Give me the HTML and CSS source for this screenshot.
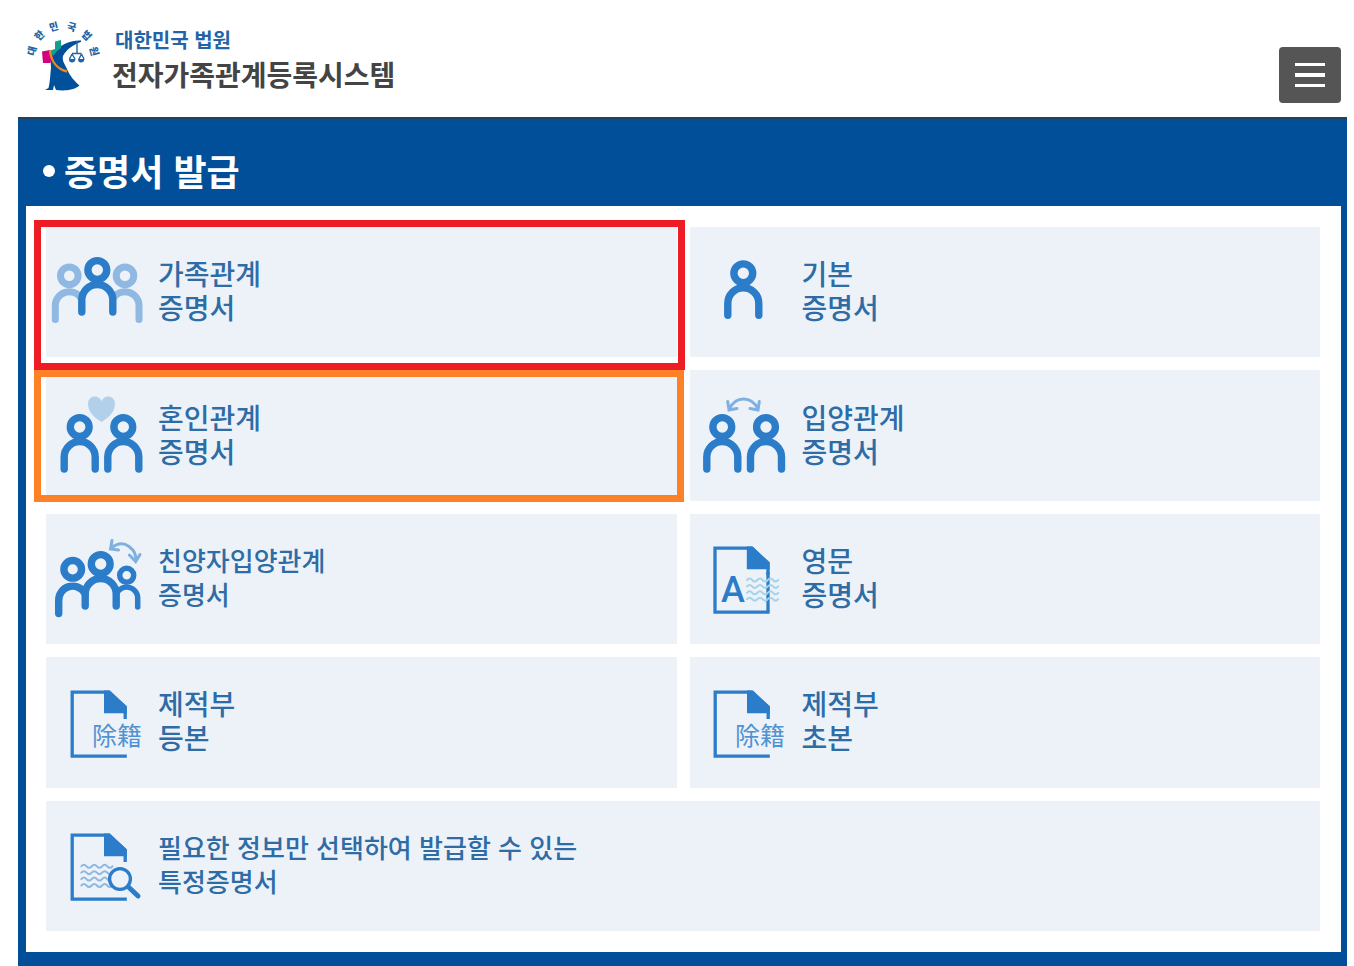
FILE: index.html
```
<!DOCTYPE html>
<html lang="ko">
<head>
<meta charset="UTF-8" />
<meta name="viewport" content="width=device-width, initial-scale=1.0"/>
<title>전자가족관계등록시스템</title>
<link rel="stylesheet" href="styles.css">
</head>
<body>
<!-- shared icon parts -->
<svg class="defs" aria-hidden="true">
<symbol id="person" viewBox="0 0 40 60" overflow="visible">
<circle cx="20" cy="14" r="9.4"/>
<path d="M4.5 56V44a15.5 15.5 0 0 1 31 0V56"/>
</symbol>
<symbol id="waves" viewBox="0 0 32 24" overflow="visible">
<path d="M0 2q2.6-3 5.2 0t5.2 0t5.2 0t5.2 0t5.2 0t5.2 0"/>
<path d="M0 8.4q2.6-3 5.2 0t5.2 0t5.2 0t5.2 0t5.2 0t5.2 0"/>
<path d="M0 14.8q2.6-3 5.2 0t5.2 0t5.2 0t5.2 0t5.2 0t5.2 0"/>
<path d="M0 21.2q2.6-3 5.2 0t5.2 0t5.2 0t5.2 0t5.2 0t5.2 0"/>
</symbol>
<symbol id="paper" viewBox="0 0 60 70" overflow="visible">
<path class="thin" d="M56.3 67.2H1.7V3.2H38L54.7 18V30"/>
<path class="fill" d="M33.5 1.5H39.5L56.3 17.5V24.3H33.5z"/>
</symbol>
</svg>
<header class="header">
<a class="logo" href="#">
<svg class="emblem" viewBox="0 0 72 70" aria-hidden="true">
<g class="arc-text">
<text transform="translate(4.5 29) rotate(-75)" y="3">대</text>
<text transform="translate(12 14) rotate(-45)" y="3">한</text>
<text transform="translate(26 5.5) rotate(-15)" y="3">민</text>
<text transform="translate(43.5 5.5) rotate(15)" y="3">국</text>
<text transform="translate(58 14) rotate(45)" y="3">법</text>
<text transform="translate(65.5 29.5) rotate(75)" y="3">원</text>
</g>
<path fill="#00509b" d="M53 18.5C43 18 35 22 29 27L22 31L23 46C22 55 22 61 20.5 66L17 68H25L26 63L28 68C36 69 46 68.500 51.500 63.500C44 57 41 52 38.500 46C36 41 34 38 35 34C38 28 45 22.500 53 20z"/>
<path fill="#d4007f" d="M14 29.500L22 28L25 36L22 41L15 41z"/>
<path fill="#12a08a" d="M27 19.500L33 18V26L28 30L25 34L22 28.500L27 27z"/>
<path d="M22 28.500C23 39 29 47 39 49.500" fill="none" stroke="#ee8a1d" stroke-width="2.400"/>
<path d="M49 19V31M44 31.500H53.500M44 32L41.500 37M44 32L47 37M53.500 32L51 37M53.500 32L56 37" fill="none" stroke="#2264a5" stroke-width="1.400"/>
<path d="M41 37H47.500Q47 40.500 44 40.500T41 37zM50 37H56.500Q56 40.500 53 40.500T50 37z" fill="#2264a5"/>
</svg>
<span class="logo-text">
<span class="court">대한민국 법원</span>
<span class="system">전자가족관계등록시스템</span>
</span>
</a>
<button class="menu" type="button" aria-label="메뉴">
<svg viewBox="0 0 30 24" aria-hidden="true"><path fill="#fff" d="M0 0h30v3H0zM0 10h30v4H0zM0 21h30v3H0z"/></svg>
</button>
</header>
<main class="content">
<h1 class="title">증명서 발급</h1>
<nav class="grid">
<a class="card mark-red" href="#">
<svg class="icon" viewBox="0 0 100 130" aria-hidden="true">
<g class="pale">
<circle cx="23.300" cy="48.700" r="8.800"/><path d="M9.300 92.500V79A14 14 0 0 1 35 71"/>
<circle cx="79" cy="48.700" r="8.800"/><path d="M93 92.500V79A14 14 0 0 0 67.300 71"/>
</g>
<use href="#person" x="31.300" y="29" width="40" height="60"/>
</svg>
<span class="name">가족관계<br>증명서</span>
</a>
<a class="card" href="#">
<svg class="icon" viewBox="0 0 100 130" aria-hidden="true">
<use href="#person" x="33.300" y="32.300" width="40" height="60"/>
</svg>
<span class="name">기본<br>증명서</span>
</a>
<a class="card mark-orange" href="#">
<svg class="icon" viewBox="0 0 100 130" aria-hidden="true">
<path class="heart" d="M55.500 51C47 46 42 40 42 33C42 24.500 52 23 55.500 30C59 23 69 24.500 69 33C69 40 64 46 55.500 51z"/>
<use href="#person" x="13.700" y="42" width="40" height="60"/>
<use href="#person" x="57.300" y="42" width="40" height="60"/>
</svg>
<span class="name">혼인관계<br>증명서</span>
</a>
<a class="card" href="#">
<svg class="icon" viewBox="0 0 100 130" aria-hidden="true">
<path class="arrow" d="M39.500 38Q44 28 53.500 28T68 38M37.700 30.500L39 39L47 37.500M69.300 30.500L68 39L60 37.500"/>
<use href="#person" x="12.300" y="42" width="40" height="60"/>
<use href="#person" x="56" y="42" width="40" height="60"/>
</svg>
<span class="name">입양관계<br>증명서</span>
</a>
<a class="card tight" href="#">
<svg class="icon" viewBox="0 0 100 130" aria-hidden="true">
<path class="arrow" d="M65 34Q75 26.500 83 32.500T89.500 46M66 26.500L64.500 35L72.500 36M83.300 41L89.700 47.500L94 40.500"/>
<circle cx="26.700" cy="55.300" r="8.800"/><path d="M12.700 99.500V87A14 14 0 0 1 39 79.500"/>
<use href="#person" x="34.700" y="36" width="40" height="60"/>
<g class="child"><circle cx="80.700" cy="61.300" r="7"/><path d="M91.700 93V84.500A11 11 0 0 0 70.500 80"/></g>
</svg>
<span class="name">친양자입양관계<br>증명서</span>
</a>
<a class="card" href="#">
<svg class="icon" viewBox="0 0 100 130" aria-hidden="true">
<use href="#paper" x="23.300" y="31" width="60" height="70"/>
<path class="thin" d="M78 58V98"/>
<text class="letter" x="43" y="87.500">A</text>
<use class="sea" href="#waves" x="57" y="64" width="32" height="24"/>
</svg>
<span class="name">영문<br>증명서</span>
</a>
<a class="card" href="#">
<svg class="icon" viewBox="0 0 100 130" aria-hidden="true">
<use href="#paper" x="24.500" y="32" width="60" height="70"/>
<text class="hanja" x="46" y="88">除籍</text>
</svg>
<span class="name">제적부<br>등본</span>
</a>
<a class="card" href="#">
<svg class="icon" viewBox="0 0 100 130" aria-hidden="true">
<use href="#paper" x="23.500" y="32" width="60" height="70"/>
<text class="hanja" x="45" y="88">除籍</text>
</svg>
<span class="name">제적부<br>초본</span>
</a>
<a class="card wide" href="#">
<svg class="icon" viewBox="0 0 100 130" aria-hidden="true">
<use href="#paper" x="24.500" y="31" width="60" height="70"/>
<use class="lines" href="#waves" x="35.300" y="63.300" width="32" height="24"/>
<circle class="lens" cx="74" cy="78" r="10.400"/>
<path class="handle" d="M83 86.500L92 95"/>
</svg>
<span class="name">필요한 정보만 선택하여 발급할 수 있는<br>특정증명서</span>
</a>
</nav>
</main>
</body>
</html>
```
FILE: styles.css
```
* {
  box-sizing: border-box;
}
body {
  font-family: 'Noto Sans CJK KR', sans-serif;
  background: #fff;
  min-height: 100vh;
  margin: 0;
  padding: 0 7px 0 18px;
  display: flex;
  flex-direction: column;
}
a {
  color: inherit;
  text-decoration: none;
}
.defs {
  position: absolute;
  width: 0;
  height: 0;
}
.header {
  display: flex;
  justify-content: space-between;
  align-items: flex-start;
  height: 117px;
  padding: 22px 6px 0 10px;
}
.logo {
  display: flex;
  gap: 12px;
}
.emblem {
  width: 72px;
  height: 70px;
  overflow: visible;
}
.arc-text {
  font-size: 10px;
  font-weight: 900;
  fill: #2264a5;
  text-anchor: middle;
}
.logo-text {
  display: flex;
  flex-direction: column;
  font-weight: bold;
}
.court {
  color: #2264a5;
  font-size: 20px;
  line-height: 36px;
  padding-left: 3px;
}
.system {
  color: #444;
  font-size: 28px;
  line-height: 32px;
}
.menu {
  width: 62px;
  height: 56px;
  margin-top: 25px;
  padding: 16px;
  background: #555;
  border: none;
  border-radius: 4px;
  cursor: pointer;
}
.menu svg {
  display: block;
  width: 30px;
  height: 24px;
}
.content {
  flex: 1;
  display: flex;
  flex-direction: column;
  background: #004f98;
  border-top: 2px solid #24405c;
  padding: 0 6px 14px 8px;
}
.title {
  display: flex;
  align-items: center;
  gap: 9px;
  height: 87px;
  margin: 0;
  padding: 18px 17px 0;
  color: #fff;
  font-size: 36px;
  line-height: 44px;
  padding-bottom: 4px;
}
.title::before {
  content: "";
  width: 12px;
  height: 12px;
  margin-top: 3px;
  border-radius: 50%;
  background: #fff;
}
.grid {
  flex: 1;
  display: grid;
  grid-template-columns: 1fr 1fr;
  grid-auto-rows: minmax(130px, 1fr);
  gap: 13px;
  padding: 21px 21px 21px 20px;
  background: #fff;
}
.card {
  position: relative;
  display: flex;
  align-items: center;
  gap: 12px;
  background: #edf2f9;
  color: #2e6ca6;
  font-size: 28px;
  font-weight: 500;
  line-height: 34px;
}
.card:hover {
  background: #e0eaf6;
}
.name {
  padding-bottom: 4px;
}
.tight {
  font-size: 26px;
}
.wide {
  grid-column: 1 / -1;
  font-size: 26px;
}
/* highlight frames around the first two cards */
.mark-red::after,
.mark-orange::after {
  content: "";
  position: absolute;
  border: 7px solid #ee1c25;
  inset: -7px -8px -13px -12px;
}
.mark-orange::after {
  border-color: #ff8127;
  inset: 0 -7px -1px -12px;
}
.icon {
  flex: none;
  width: 100px;
  height: 130px;
  fill: none;
  stroke: #2b7cc9;
  stroke-width: 7.4px;
  stroke-linecap: round;
}
.pale {
  stroke: #8fb8e2;
  stroke-width: 7px;
}
.child {
  stroke-width: 5.5px;
}
.heart {
  fill: #b3d0ea;
  stroke: none;
}
.arrow {
  stroke: #7fb0e0;
  stroke-width: 3px;
}
.thin {
  stroke-width: 3.3px;
  stroke-linecap: butt;
}
.fill {
  fill: #2b7cc9;
  stroke: none;
}
.letter,
.hanja {
  fill: #2b7cc9;
  stroke: none;
}
.letter {
  font-family: Roboto, sans-serif;
  font-size: 36px;
  font-weight: 500;
  text-anchor: middle;
}
.hanja {
  font-family: 'Noto Sans CJK KR', sans-serif;
  font-size: 25px;
  font-weight: 400;
  opacity: 0.8;
}
.sea {
  stroke: #a5d3ea;
  stroke-width: 2px;
}
.lines {
  stroke: #8fb8e2;
  stroke-width: 2px;
}
.lens {
  fill: #edf2f9;
  stroke-width: 3.3px;
}
.handle {
  stroke-width: 5px;
}
```
